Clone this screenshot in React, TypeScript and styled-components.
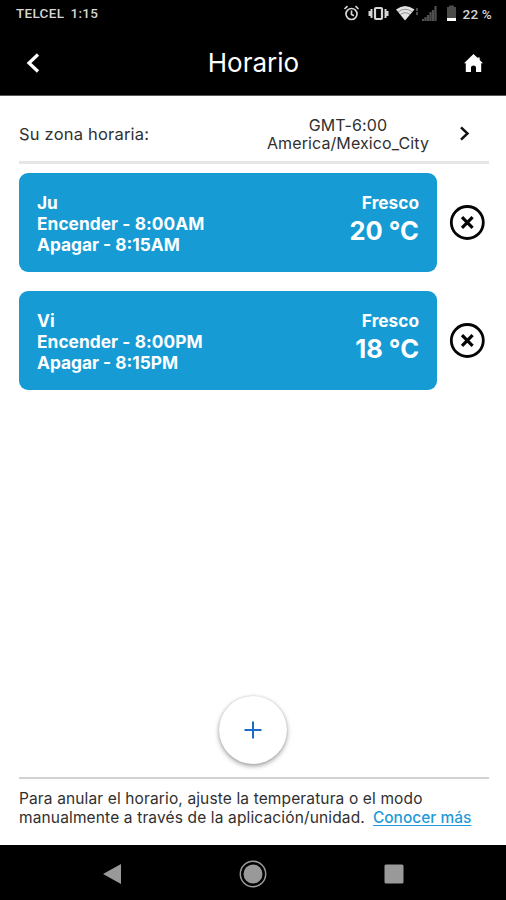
import React from 'react';
import styled, { createGlobalStyle } from 'styled-components';

const Global = createGlobalStyle`
  * { box-sizing: border-box; }
  body { margin: 0; background: #fff; font-family: Inter, "Liberation Sans", sans-serif; }
  button { border: 0; padding: 0; background: none; color: inherit; font: inherit; display: flex; }
  svg { display: block; }
`;

const Screen = styled.div`
  width: 506px; height: 900px; display: flex; flex-direction: column; background: #fff; color: #303030;
`;
const StatusBar = styled.div`
  height: 28px; background: #000; color: #d6d6d6; display: flex; justify-content: space-between;
  padding: 0 14px 0 16px; font: 500 13.5px/27px Roboto, sans-serif;
`;
const Carrier = styled.span`
  letter-spacing: 0.3px; word-spacing: 2.5px;
`;
const StatusIcons = styled.div`
  display: flex; align-items: center;
`;
const Battery = styled.span`
  letter-spacing: 0.2px; margin-left: 6px;
`;
const Header = styled.header`
  height: 68px; background: #000; color: #fff; display: flex; align-items: center;
  justify-content: space-between; padding: 4px 22px 1px 25px; border-bottom: 1px solid #555;
`;
const Title = styled.h1`
  margin: 0 0 0 3px; font-size: 26px; font-weight: 400; line-height: 30px; letter-spacing: 0;
`;
const Main = styled.main`
  flex: 1; display: flex; flex-direction: column; padding: 0 17px 0 19px;
`;
const ZoneRow = styled.div`
  height: 68px; display: flex; align-items: center; border-bottom: 3px solid #e6e6e6; padding: 11px 18px 0 0;
  font-size: 16px; line-height: 18.5px;
`;
const ZoneLabel = styled.span`
  flex: 1; font-size: 16.5px; letter-spacing: 0.2px;
`;
const ZoneValue = styled.span`
  text-align: center; margin-right: 30px; letter-spacing: 0.1px;
`;
const List = styled.div`
  display: flex; flex-direction: column; gap: 19px; margin-top: 9px;
`;
const Entry = styled.div`
  display: flex; align-items: center; gap: 12px;
`;
const Card = styled.div`
  width: 418px; height: 99px; border-radius: 9px; background: #169bd5; color: #fff;
  display: flex; justify-content: space-between; padding: 19px 18px 0;
  font-size: 17.3px; font-weight: 700; line-height: 21px;
`;
const Times = styled.div`
  display: flex; flex-direction: column;
`;
const Line = styled.span<{ $track?: number }>`
  letter-spacing: ${(p) => p.$track ?? 0}px; white-space: nowrap;
`;
const Reading = styled.div`
  display: flex; flex-direction: column; align-items: flex-end;
`;
const Temp = styled.div`
  font-size: 25.5px; line-height: 36px; white-space: nowrap;
`;
const AddArea = styled.div`
  margin-top: auto; display: flex; justify-content: center; padding-bottom: 13px;
`;
const AddButton = styled.button`
  && { width: 68px; height: 68px; border-radius: 50%; background: #fff; align-items: center; justify-content: center;
  box-shadow: 0 2px 5px rgba(0,0,0,.38), 0 0 2px rgba(0,0,0,.15); margin-right: 2px; }
`;
const Note = styled.p`
  margin: 0; height: 68px; border-top: 2px solid #d2d2d2; padding-top: 10px;
  font-size: 15.5px; line-height: 19px; white-space: nowrap;
`;
const NoteLine = styled.span<{ $track: number }>`
  display: block; letter-spacing: ${(p) => p.$track}px;
`;
const Link = styled.a`
  color: #1e9bd7; margin-left: 8px; font-weight: 500; letter-spacing: 0;
  text-decoration: underline; text-underline-offset: 2px; text-decoration-thickness: 1px;
`;
const NavBar = styled.nav`
  height: 55px; background: #000; display: grid; grid-template-columns: repeat(3, 141px);
  justify-content: center; justify-items: center; align-items: center; padding-top: 2px;
`;

const StatusGlyphs = () => (
  <svg width="114" height="28" viewBox="0 0 114 28">
    <g fill="none" stroke="#d6d6d6" strokeWidth="1.7">
      <circle cx="8.5" cy="14" r="5.5" />
      <path d="M8.5 10.5v4l2.500 1.2M1.5 9l3-2.8M15.5 9l-3-2.8" />
    </g>
    <rect x="32" y="8" width="7" height="11" rx="1" fill="none" stroke="#d6d6d6" strokeWidth="2.2" />
    <path d="M28.500 9v9M42.500 9v9M26.500 11v5M44.500 11v5" stroke="#d6d6d6" strokeWidth="2" />
    <path d="M53 9.500Q62 2.500 71.500 9.500L62 20.500Z" fill="#e2e2e2" />
    <path d="M55 12Q62 6.500 69.500 12M57.500 14.500Q62 11 67 14.500" fill="none" stroke="#555" strokeWidth=".6" />
    <path d="M74 8v8" stroke="#4a4a4a" strokeWidth="2" strokeDasharray="3 1" />
    <path d="M80 21v-2M82.500 21v-4M85 21v-6M87.500 21v-9M90 21v-11M92.500 21V6" stroke="#505050" strokeWidth="2.2" />
    <path d="M104 7h2V5.500h5V7h2v11h-9z" fill="#4b4b4b" />
    <path d="M104 18h9v3h-9z" fill="#fff" />
  </svg>
);

const Remove = () => (
  <button aria-label="Eliminar">
    <svg width="36" height="36" viewBox="0 0 36 36" fill="none" stroke="#050505">
      <circle cx="18.300" cy="17.500" r="16" strokeWidth="2.800" />
      <path d="M13 12.200l10.600 10.600M23.600 12.200l-10.600 10.600" strokeWidth="3.200" />
    </svg>
  </button>
);

const entries = [
  { day: 'Ju', on: 'Encender - 8:00AM', off: 'Apagar - 8:15AM', mode: 'Fresco', temp: '20 °C' },
  { day: 'Vi', on: 'Encender - 8:00PM', off: 'Apagar - 8:15PM', mode: 'Fresco', temp: '18 °C' },
];

export default function App() {
  return (
    <Screen>
      <Global />
      <StatusBar>
        <Carrier>TELCEL 1:15</Carrier>
        <StatusIcons>
          <StatusGlyphs />
          <Battery>22 %</Battery>
        </StatusIcons>
      </StatusBar>
      <Header>
        <button aria-label="Atrás">
          <svg width="16" height="22" viewBox="0 0 16 22" fill="none" stroke="#fff" strokeWidth="3.200">
            <path d="M13 2.500L4 11l9 8.500" />
          </svg>
        </button>
        <Title>Horario</Title>
        <button aria-label="Inicio">
          <svg width="21" height="20" viewBox="0 0 21 20">
            <path d="M10.500 1L1 10.300h1.800V19H8v-4.500q0-2 2.500-2t2.500 2V19h5.200v-8.700H20L16.700 7V4.500h-2v.5z" fill="#fff" />
          </svg>
        </button>
      </Header>
      <Main>
        <ZoneRow>
          <ZoneLabel>Su zona horaria:</ZoneLabel>
          <ZoneValue>GMT-6:00<br />America/Mexico_City</ZoneValue>
          <svg width="12" height="16" viewBox="0 0 12 16" fill="none" stroke="#111" strokeWidth="2.500">
            <path d="M2 1.300L8.500 7.500 2 13.700" />
          </svg>
        </ZoneRow>
        <List>
          {entries.map((e) => (
            <Entry key={e.day}>
              <Card>
                <Times>
                  <Line>{e.day}</Line>
                  <Line $track={0.06}>{e.on}</Line>
                  <Line>{e.off}</Line>
                </Times>
                <Reading>
                  <Line>{e.mode}</Line>
                  <Temp>{e.temp}</Temp>
                </Reading>
              </Card>
              <Remove />
            </Entry>
          ))}
        </List>
        <AddArea>
          <AddButton aria-label="Añadir">
            <svg width="18" height="18" viewBox="0 0 18 18" stroke="#1b6bc8" strokeWidth="2">
              <path d="M9 .5v17M.5 9h17" />
            </svg>
          </AddButton>
        </AddArea>
        <Note>
          <NoteLine $track={0.13}>Para anular el horario, ajuste la temperatura o el modo</NoteLine>
          <NoteLine $track={0.14}>
            manualmente a través de la aplicación/unidad.
            <Link>Conocer más</Link>
          </NoteLine>
        </Note>
      </Main>
      <NavBar>
        <svg width="20" height="22" viewBox="0 0 20 22"><path d="M1 11L19 1v20z" fill="#999" /></svg>
        <svg width="28" height="28" viewBox="0 0 28 28">
          <circle cx="14" cy="14" r="9.500" fill="#999" />
          <circle cx="14" cy="14" r="12.700" fill="none" stroke="#999" strokeWidth="1.500" />
        </svg>
        <svg width="20" height="20" viewBox="0 0 20 20"><rect x=".5" y=".5" width="19" height="19" rx="1.500" fill="#999" /></svg>
      </NavBar>
    </Screen>
  );
}
